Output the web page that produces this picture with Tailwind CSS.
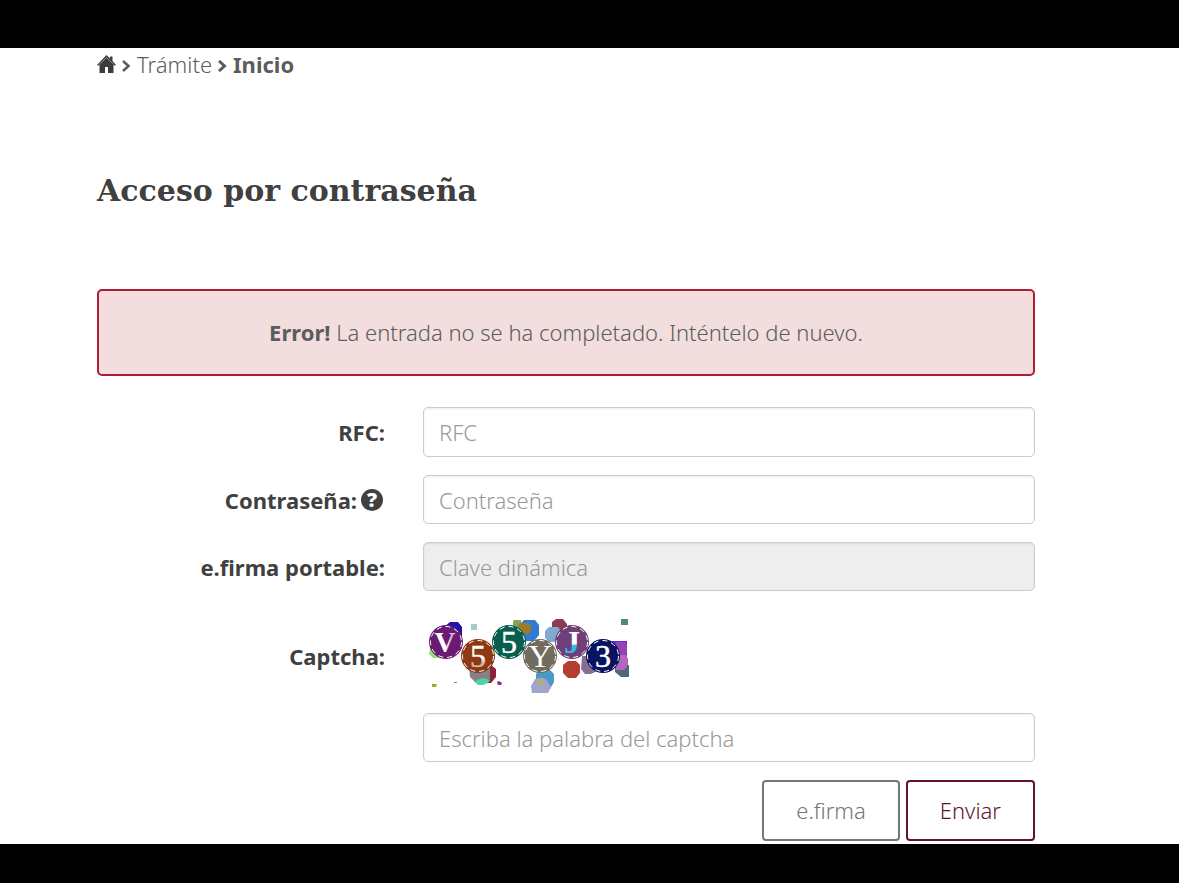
<!DOCTYPE html>
<html lang="es">
<head>
<meta charset="utf-8">
<meta name="viewport" content="width=device-width, initial-scale=1">
<title>Acceso por contraseña</title>
<script src="https://cdn.jsdelivr.net/npm/@tailwindcss/browser@4"></script>
</head>
<body class="flex min-h-screen flex-col bg-black font-['Noto_Sans',sans-serif] text-[22px] leading-8 font-light text-[#5c5c5c]">
<div class="h-12"></div>
<main class="bg-white pr-36 pl-[97px] pb-[3px]">
  <nav aria-label="Ruta" class="flex h-8 items-center gap-[6px]">
    <a href="#" aria-label="Página principal" class="text-[#393c3e]">
      <svg class="h-[18px] w-[19px]" viewBox="0 0 19 18" fill="currentColor"><path d="M9.500 0 13 3.500V1.500h2.500V6L19 10l-1.200.7L16.500 9.500V18H11v-6H8v6H2.500V9.500L1.200 10.700 0 10Z"/><path d="M2.500 9.200 9.500 2.600l7 6.600" fill="none" stroke="#aaa" stroke-width=".8"/></svg>
    </a>
    <svg class="mt-1 h-3 w-[9px]" viewBox="0 0 9 12" fill="none" stroke="currentColor" stroke-width="2.500"><path d="m1 1 5.500 5-5.500 5"/></svg>
    <a href="#">Trámite</a>
    <svg class="mt-1 h-3 w-[9px]" viewBox="0 0 9 12" fill="none" stroke="currentColor" stroke-width="3"><path d="m1 1 5.500 5-5.500 5"/></svg>
    <span class="font-bold">Inicio</span>
  </nav>
  <h1 class="mt-[91px] font-['DejaVu_Serif',serif] text-[30px] leading-10 font-bold text-[#404041]">Acceso por contraseña</h1>
  <div role="alert" class="mt-[78px] rounded-[5px] border-2 border-[#b31b35] bg-[#f2dede] pt-[25px] pb-[26px] text-center"><strong class="font-bold">Error!</strong> La entrada no se ha completado. Inténtelo de nuevo.</div>
  <form class="mt-[31px]">
    <div class="grid grid-cols-[288px_1fr] items-center gap-x-[38px] gap-y-[18px]">
      <label for="rfc" class="text-right font-bold text-[#404041]">RFC:</label>
      <input id="rfc" type="text" placeholder="RFC" class="h-[50px] w-full rounded-[5px] border border-[#ccc] px-[15px] shadow-[inset_0_1px_2px_rgba(0,0,0,0.08)] placeholder:text-[#999]">
      <div class="flex items-center justify-end gap-1 pr-[2px] text-[#404041]">
        <label for="clave" class="font-bold">Contraseña:</label>
        <button type="button" aria-label="Ayuda" class="grid size-[22px] place-items-center rounded-full bg-[#404041] text-[20px] leading-[22px] font-black text-white">?</button>
      </div>
      <input id="clave" type="password" placeholder="Contraseña" class="h-[49px] w-full rounded-[5px] border border-[#ccc] px-[15px] shadow-[inset_0_1px_2px_rgba(0,0,0,0.08)] placeholder:text-[#999]">
      <label for="firma" class="text-right font-bold text-[#404041]">e.firma portable:</label>
      <input id="firma" type="text" disabled placeholder="Clave dinámica" class="h-[49px] w-full rounded-[5px] border border-[#ccc] bg-[#eee] px-[15px] shadow-[inset_0_1px_2px_rgba(0,0,0,0.08)] placeholder:text-[#999]">
      <label for="captcha" class="mt-2 text-right font-bold text-[#404041]">Captcha:</label>
      <svg role="img" aria-label="Captcha" class="mt-2 h-[78px] w-[206px]" viewBox="423 617 206 78">
        <g>
          <path fill="#2114a8" d="M450 622h8l4 5v10h-14l-4-5v-5z"/>
          <path fill="#90df77" d="M430 649h9v9h-6l-4-4z"/>
          <path fill="#a2cfc1" d="M471 624h6v6h-6z"/>
          <path fill="#8c2439" d="M483 665h8l5 4v8l-5 6h-8z"/>
          <path fill="#858186" d="M469 667h21v12l-5 4h-9l-6-6z"/>
          <path fill="#4fd2a7" d="M477 680l6-2 7 2-2 3-5 2h-5l-3-3z"/>
          <path fill="#a5a62c" d="M432 684h5l-1 3h-4z"/>
          <path fill="#888" d="M454 682h3v1h-3z"/>
          <path fill="#92258e" d="M497 682l2-1 3 2-1 2h-3z"/>
          <path fill="#89a056" d="M514 620h7v10h-8v-8z"/>
          <path fill="#317bd1" d="M524 620h11l4 5v10l-5 6h-10l-5-6v-10z"/>
          <path fill="#997c2b" d="M520 623h8l3 3v5l-3 3h-6l-5-5z"/>
          <path fill="#8f3b4d" d="M556 619h7l4 5v8h-12l-3-5v-5z"/>
          <path fill="#81a9d0" d="M549 627h9l3 4v8l-4 3h-8l-4-4v-7z"/>
          <path fill="#4d897e" d="M621 619h7v6h-7z"/>
          <path fill="#b53e31" d="M568 661h8l4 4v8l-4 5h-8l-5-5v-8z"/>
          <path fill="#87708f" d="M582 656h15v15l-6 3h-6l-4-5z"/>
          <path fill="#6529ee" d="M612 641h15v18h-15z"/>
          <path fill="#9742b4" d="M616 642h9l2 3v9l-7 3h-6z"/>
          <path fill="#4f697a" d="M615 665h14v12h-8l-6-5z"/>
          <path fill="#b465be" d="M618 655h8l2 4v6l-4 5h-8v-9z"/>
          <path fill="#4999ca" d="M540 669h9l5 5v8l-4 7h-9l-5-6v-9z"/>
          <path fill="#9fa5cb" d="M535 679h11l5 8-3 6h-16l-1-7z"/>
          <path fill="#b0a994" d="M538 678h6l1 6-3 2h-4l-2-4z"/>
        </g>
        <g stroke="#fff" stroke-width="1" stroke-dasharray="5 4">
          <circle cx="446" cy="642" r="17" fill="#6c1b72" stroke="none"/><circle cx="446" cy="642" r="15.500" fill="none"/>
          <circle cx="478" cy="656" r="17" fill="#8d3913" stroke="none"/><circle cx="478" cy="656" r="15.500" fill="none"/>
          <circle cx="509" cy="642" r="17" fill="#075d4e" stroke="none"/><circle cx="509" cy="642" r="15.500" fill="none"/>
          <circle cx="540" cy="656" r="17" fill="#716b60" stroke="none"/><circle cx="540" cy="656" r="15.500" fill="none"/>
          <circle cx="572" cy="642" r="17" fill="#703e78" stroke="none"/><circle cx="572" cy="642" r="15.500" fill="none"/>
          <circle cx="603" cy="656" r="17" fill="#0a1262" stroke="none"/><circle cx="603" cy="656" r="15.500" fill="none"/>
        </g>
        <defs>
          <linearGradient id="fade" x2="1" y2="0"><stop offset=".45" stop-color="#fff"/><stop offset="1" stop-color="#c5a0c8"/></linearGradient>
          <linearGradient id="jot" x2="0" y2="1"><stop offset=".55" stop-color="#fff"/><stop offset=".6" stop-color="#38b8e4"/></linearGradient>
          <linearGradient id="cinco" x2="0" y2="1"><stop offset=".55" stop-color="#fff"/><stop offset=".7" stop-color="#d3b3a5"/></linearGradient>
        </defs>
        <g class="font-['Liberation_Serif',serif] font-normal" font-size="32" text-anchor="middle" fill="#fff" stroke="#fff" stroke-width=".5">
          <text x="445" y="652" font-size="29" class="font-bold" fill="url(#fade)" stroke="none">V</text>
          <text x="478" y="667" fill="url(#cinco)" stroke="url(#cinco)">5</text>
          <text x="509" y="653">5</text>
          <text x="540" y="667" stroke="none">Y</text>
          <text x="572" y="653" class="font-bold" fill="url(#jot)" stroke="none">J</text>
          <text x="603" y="667">3</text>
        </g>
      </svg>
      <input id="captcha" type="text" placeholder="Escriba la palabra del captcha" class="col-start-2 h-[49px] w-full rounded-[5px] border border-[#ccc] px-[15px] shadow-[inset_0_1px_2px_rgba(0,0,0,0.08)] placeholder:text-[#999]">
    </div>
    <div class="mt-[18px] flex justify-end gap-[6px]">
      <button type="button" class="h-[61px] rounded-[4px] border-2 border-[#767676] px-8 pb-px text-[#767676]">e.firma</button>
      <button type="submit" class="h-[61px] rounded-[4px] border-2 border-[#621132] px-8 pb-px text-[#621132]">Enviar</button>
    </div>
  </form>
</main>
</body>
</html>
